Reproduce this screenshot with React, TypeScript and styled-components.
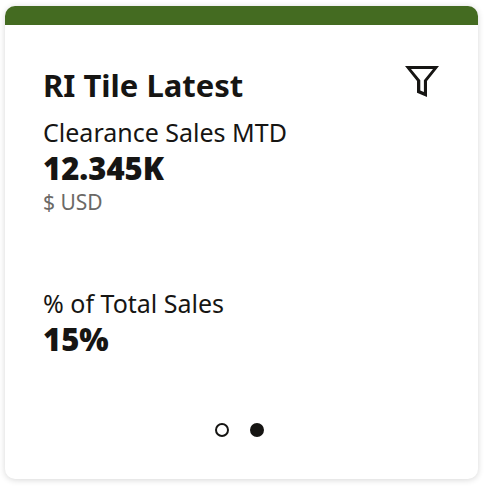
import React, { useState } from "react";
import styled, { createGlobalStyle } from "styled-components";

const GlobalStyle = createGlobalStyle`
  *, *::before, *::after { box-sizing: border-box; }
  body {
    margin: 0;
    background: #fff;
    color: #161513;
    font-family: "Noto Sans", "Open Sans", sans-serif;
  }
`;

const Page = styled.main`
  padding: 6px 12px 7px 5px;
`;

const Tile = styled.article`
  display: flex;
  flex-direction: column;
  overflow: hidden;
  border-radius: 10px;
  background: #fff;
  box-shadow: 0 1px 6px rgba(0, 0, 0, 0.16);
`;

const Accent = styled.div`
  height: 19px;
  background: #446b21;
`;

const Content = styled.div`
  display: flex;
  flex-direction: column;
  padding: 40px 39px 42px 38px;
`;

const Header = styled.header`
  display: flex;
  align-items: flex-start;
  justify-content: space-between;
  height: 50px;
`;

const Title = styled.h1`
  margin: 0;
  font-size: 31px;
  font-weight: 700;
  line-height: 40px;
  white-space: nowrap;
`;

const FilterButton = styled.button`
  display: flex;
  padding: 0;
  border: 0;
  background: none;
  color: inherit;
  cursor: pointer;
`;

const Metrics = styled.dl`
  display: flex;
  flex-direction: column;
  gap: 70px;
  margin: 0;
`;

const Metric = styled.div`
  display: flex;
  flex-direction: column;
`;

const Label = styled.dt`
  font-size: 25px;
  line-height: 34px;
  white-space: nowrap;
`;

const Value = styled.dd`
  margin: 0;
  font-size: 31px;
  font-weight: 900;
  line-height: 39px;
`;

const Unit = styled.dd`
  margin: 0;
  color: #6b6966;
  font-size: 21px;
  line-height: 28px;
`;

const Pager = styled.nav`
  display: flex;
  justify-content: center;
  gap: 21px;
  margin: 64px 3px 0 0;
`;

const Dot = styled.button<{ $active: boolean }>`
  width: 14px;
  height: 14px;
  padding: 0;
  border: 2px solid #161513;
  border-radius: 50%;
  background: ${({ $active }) => ($active ? "#161513" : "#fff")};
  cursor: pointer;
`;

const metrics = [
  { label: "Clearance Sales MTD", value: "12.345K", unit: "$ USD" },
  { label: "% of Total Sales", value: "15%" },
];

function FilterIcon() {
  return (
    <svg width="34" height="34" viewBox="0 0 34 34" aria-hidden="true">
      <path
        d="M0 1H34L22 16V32L12 27.7V16ZM6 4L15.3 15.2V25.4L18.9 27V15.2L28 4Z"
        fill="currentColor"
        fillRule="evenodd"
      />
    </svg>
  );
}

export default function App() {
  const [page, setPage] = useState(1);
  return (
    <>
      <GlobalStyle />
      <Page>
        <Tile>
          <Accent />
          <Content>
            <Header>
              <Title>RI Tile Latest</Title>
              <FilterButton type="button" aria-label="Filter">
                <FilterIcon />
              </FilterButton>
            </Header>
            <Metrics>
              {metrics.map(({ label, value, unit }) => (
                <Metric key={label}>
                  <Label>{label}</Label>
                  <Value>{value}</Value>
                  {unit && <Unit>{unit}</Unit>}
                </Metric>
              ))}
            </Metrics>
            <Pager aria-label="Tile pages">
              {[0, 1].map((index) => (
                <Dot
                  key={index}
                  type="button"
                  $active={page === index}
                  aria-label={`Page ${index + 1}`}
                  aria-current={page === index ? "page" : undefined}
                  onClick={() => setPage(index)}
                />
              ))}
            </Pager>
          </Content>
        </Tile>
      </Page>
    </>
  );
}
